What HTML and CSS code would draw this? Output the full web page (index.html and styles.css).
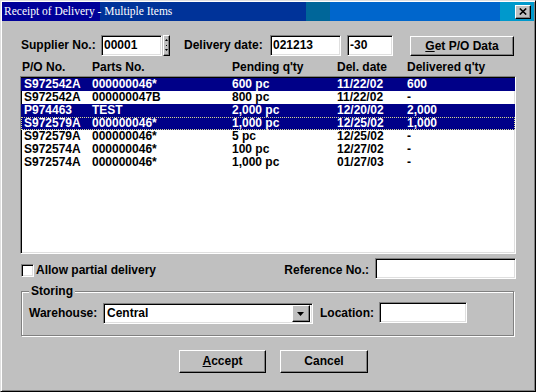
FILE: index.html
```html
<!DOCTYPE html>
<html>
<head>
<meta charset="utf-8">
<title>Receipt of Delivery - Multiple Items</title>
<link rel="stylesheet" href="styles.css">
</head>
<body>
<div class="window">
  <div class="titlebar">
    <span class="title">Receipt of Delivery - Multiple Items</span>
    <span class="close raised">
      <svg width="8" height="7" viewBox="0 0 8 7"><path d="M0.8 0.5 L7.2 6.5 M7.2 0.5 L0.8 6.5" stroke="#000" stroke-width="1.6" fill="none"/></svg>
    </span>
  </div>
  <div class="content">
    <div class="toprow">
      <span class="lbl lbl-supplier">Supplier No.:</span>
      <span class="field f-supplier">00001</span>
      <span class="spin raised">
        <svg width="5" height="19" viewBox="0 0 5 19"><path d="M2.5 3 L4 5 H1 Z" fill="#000"/><rect x="2" y="9" width="1" height="1" fill="#000"/><path d="M1 13 H4 L2.5 15 Z" fill="#000"/></svg>
      </span>
      <span class="lbl lbl-date">Delivery date:</span>
      <span class="field f-date">021213</span>
      <span class="field f-offset">-30</span>
      <span class="btn btn-get"><u>G</u>et P/O Data</span>
    </div>

    <div class="header">
      <span>P/O No.</span><span>Parts No.</span><span>Pending q'ty</span><span>Del. date</span><span>Delivered q'ty</span>
    </div>

    <div class="list">
      <div class="row sel"><span>S972542A</span><span>000000046*</span><span>600 pc</span><span>11/22/02</span><span>600</span></div>
      <div class="row"><span>S972542A</span><span>000000047B</span><span>800 pc</span><span>11/22/02</span><span>-</span></div>
      <div class="row sel"><span>P974463</span><span>TEST</span><span>2,000 pc</span><span>12/20/02</span><span>2,000</span></div>
      <div class="row sel focus"><span>S972579A</span><span>000000046*</span><span>1,000 pc</span><span>12/25/02</span><span>1,000</span></div>
      <div class="row"><span>S972579A</span><span>000000046*</span><span>5 pc</span><span>12/25/02</span><span>-</span></div>
      <div class="row"><span>S972574A</span><span>000000046*</span><span>100 pc</span><span>12/27/02</span><span>-</span></div>
      <div class="row"><span>S972574A</span><span>000000046*</span><span>1,000 pc</span><span>01/27/03</span><span>-</span></div>
    </div>

    <div class="optrow">
      <span class="checkbox"></span>
      <span class="lbl lbl-allow">Allow partial delivery</span>
      <span class="lbl lbl-ref">Reference No.:</span>
      <span class="field f-ref"></span>
    </div>

    <div class="group">
      <span class="group-label">Storing</span>
      <div class="grouprow">
        <span class="lbl lbl-wh">Warehouse:</span>
        <span class="field combo">
          <span class="combo-text">Central</span>
          <span class="combo-btn raised">
            <svg width="7" height="4" viewBox="0 0 7 4"><path d="M0 0 H7 L3.5 4 Z" fill="#000"/></svg>
          </span>
        </span>
        <span class="lbl lbl-loc">Location:</span>
        <span class="field f-loc"></span>
      </div>
    </div>

    <div class="buttons">
      <span class="btn btn-accept"><u>A</u>ccept</span>
      <span class="btn btn-cancel">Cancel</span>
    </div>
  </div>
</div>
</body>
</html>
```

FILE: styles.css
```css
* { box-sizing: border-box; }

html, body {
  margin: 0;
  padding: 0;
}

body {
  width: 536px;
  height: 392px;
  overflow: hidden;
  background: #c0c0c0;
  font-family: "Liberation Sans", Arial, sans-serif;
  font-weight: bold;
  font-size: 12px;
  line-height: 13px;
  color: #000;
}

.window {
  width: 536px;
  height: 392px;
  background: #c0c0c0;
  border: 1px solid;
  border-color: #dfdfdf #000 #000 #dfdfdf;
  padding: 1px;
  box-shadow: inset 1px 1px #fff, inset -1px -1px #808080;
  display: flex;
  flex-direction: column;
}

.titlebar {
  height: 19px;
  flex: none;
  display: flex;
  align-items: center;
  justify-content: space-between;
  padding: 0 3px 0 2px;
  background: linear-gradient(to right,
    #000099 0, #000099 98px,
    #003399 98px, #003399 304px,
    #006699 304px, #006699 328px,
    #0066cc 328px, #0066cc 498px,
    #0099cc 498px, #0099cc 100%);
}

.title {
  font-family: "Liberation Serif", "Times New Roman", serif;
  font-weight: normal;
  font-size: 11.5px;
  color: #fff;
  white-space: nowrap;
}

.raised {
  background: #c0c0c0;
  border: 1px solid;
  border-color: #fff #000 #000 #fff;
  box-shadow: inset -1px -1px #808080;
}

.close {
  width: 16px;
  height: 14px;
  margin-top: 1px;
  display: flex;
  align-items: center;
  justify-content: center;
}

.close svg { display: block; margin-left: -1px; margin-top: -1px; }

.content {
  flex: 1;
  display: flex;
  flex-direction: column;
  padding: 14px 18px 0 18px;
}

.lbl { white-space: nowrap; }

.field {
  display: flex;
  align-items: center;
  background: #fff;
  border: 1px solid;
  border-color: #808080 #fff #fff #808080;
  box-shadow: inset 1px 1px #000, inset -1px -1px #dfdfdf;
  padding: 0 2px 0 2px;
  height: 21px;
  white-space: nowrap;
}

.toprow {
  display: flex;
  align-items: center;
  height: 21px;
}

.lbl-supplier { width: 81px; padding-left: 1px; }
.f-supplier { width: 61px; }

.spin {
  width: 7px;
  height: 21px;
  margin-left: 1px;
  display: flex;
}
.spin svg { display: block; }

.lbl-date { width: 86px; margin-left: 14px; }
.f-date { width: 71px; }
.f-offset { width: 46px; margin-left: 6px; }

.btn {
  display: flex;
  align-items: center;
  justify-content: center;
  background: #c0c0c0;
  border: 1px solid;
  border-color: #fff #000 #000 #fff;
  box-shadow: inset -1px -1px #808080;
  white-space: nowrap;
}

.btn u { text-decoration-thickness: 1px; text-underline-offset: 1px; }

.btn-get {
  width: 104px;
  height: 20px;
  margin-left: 17px;
  align-self: flex-end;
}

.header,
.row {
  display: grid;
  grid-template-columns: 70px 140px 105px 70px 1fr;
  white-space: nowrap;
}

.header {
  margin-top: 5px;
  height: 13px;
  padding-left: 2px;
}

.list {
  margin-top: 2px;
  height: 178px;
  background: #fff;
  border: 1px solid;
  border-color: #808080 #fff #fff #808080;
  box-shadow: inset 1px 1px #000, inset -1px -1px #dfdfdf;
  padding: 1px 0 1px 0;
}

.row {
  height: 13px;
  padding-left: 3px;
  grid-template-columns: 68px 140px 105px 70px 1fr;
}

.row.sel {
  background: #000088;
  color: #fff;
}

.row.focus {
  outline: 1px dotted #d8d890;
  outline-offset: -1px;
}

.optrow {
  margin-top: 4px;
  height: 21px;
  display: flex;
  align-items: flex-end;
}

.checkbox {
  width: 13px;
  height: 13px;
  margin-left: 1px;
  margin-bottom: 2px;
  background: #fff;
  border: 1px solid;
  border-color: #808080 #fff #fff #808080;
  box-shadow: inset 1px 1px #000, inset -1px -1px #dfdfdf;
}

.lbl-allow { margin-left: 2px; margin-bottom: 2px; }
.lbl-ref { margin-left: auto; margin-right: 6px; margin-bottom: 2px; }
.f-ref { width: 141px; }

.group {
  position: relative;
  margin: 12px 2px 0 1px;
  height: 45px;
  border: 1px solid #808080;
  box-shadow: 1px 1px 0 #fff, inset 1px 1px 0 #fff;
  padding: 10px 0 0 7px;
}

.group-label {
  position: absolute;
  top: -7px;
  left: 7px;
  padding: 0 2px;
  background: #c0c0c0;
}

.grouprow {
  display: flex;
  align-items: center;
  height: 22px;
}

.lbl-wh { width: 74px; }

.combo {
  width: 210px;
  align-self: flex-end;
  padding: 0 2px 0 3px;
  justify-content: space-between;
}

.combo-btn {
  width: 18px;
  height: 17px;
  display: flex;
  align-items: center;
  justify-content: center;
}
.combo-btn svg { display: block; margin-top: 1px; margin-left: -1px; }

.lbl-loc { width: 59px; margin-left: 7px; }
.f-loc { width: 88px; align-self: flex-start; }

.buttons {
  display: flex;
  margin-top: 14px;
  padding-left: 159px;
  gap: 14px;
}

.btn-accept { width: 87px; height: 23px; }
.btn-cancel { width: 88px; height: 23px; }
```
